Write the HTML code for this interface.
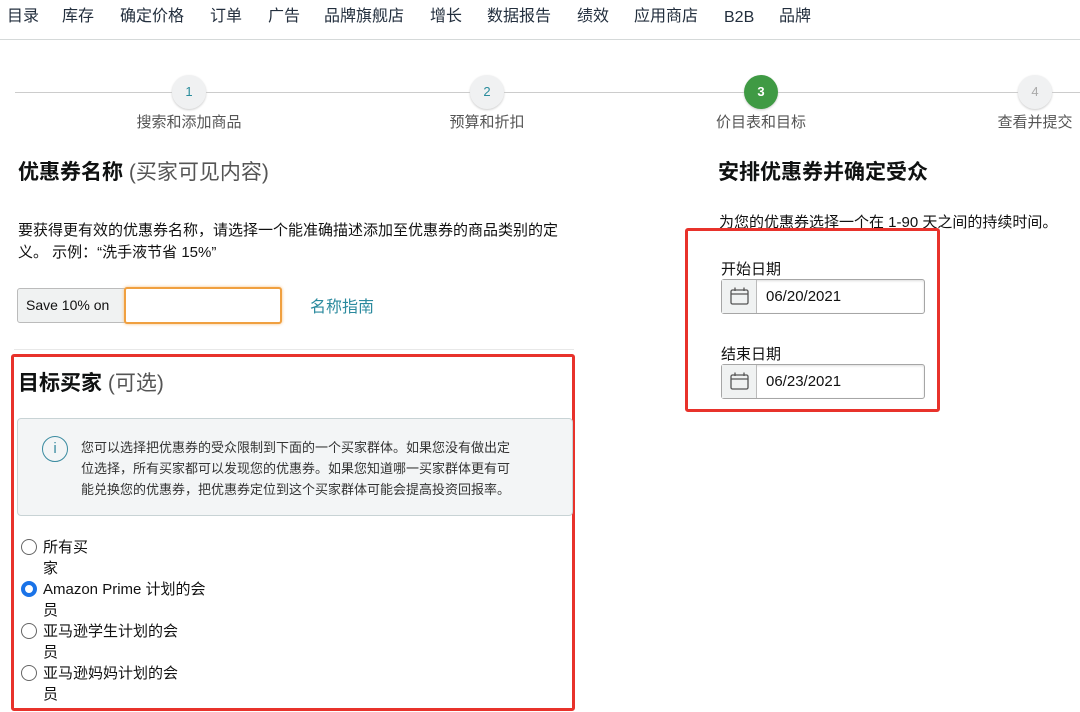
<!DOCTYPE html><html><head><meta charset="utf-8"><style>
*{margin:0;padding:0;box-sizing:border-box}
body{width:1080px;height:712px;background:#fff;position:relative;overflow:hidden;font-family:"Liberation Sans","Noto Sans CJK SC",sans-serif;color:#111}
.a{position:absolute;white-space:nowrap}
.nav{top:6px;font-size:16px;color:#232f3e;line-height:22px;height:22px}
.c{position:absolute;width:34px;height:34px;border-radius:50%;background:#f0f1f2;box-shadow:0 1px 2px #ccc;text-align:center;line-height:34px;font-size:13px;color:#2a8c9c;top:75px}
.sl{top:111px;font-size:15px;color:#555;transform:translateX(-50%)}
h2{position:absolute;font-size:21px;font-weight:bold;color:#0f1111;white-space:nowrap}
h2 span{font-weight:normal;color:#555}
.t{font-size:15px;color:#111}
.rb{position:absolute;border:3px solid #e8322b;border-radius:3px}
.in{position:absolute;width:204px;height:35px;border:1px solid #a6a6a6;border-radius:3px;background:#fff;box-shadow:inset 0 1px 2px #ddd}
.in .ic{position:absolute;left:0;top:0;width:35px;height:33px;background:#f0f2f2;border-right:1px solid #bbb}
.in .v{position:absolute;left:44px;top:8px;font-size:15px}
.r{position:absolute;left:21px;width:16px;height:16px;border:1px solid #666;border-radius:50%;background:#fff}
</style></head><body>
<div class="a nav" style="left:7px">目录</div>
<div class="a nav" style="left:62px">库存</div>
<div class="a nav" style="left:120px">确定价格</div>
<div class="a nav" style="left:210px">订单</div>
<div class="a nav" style="left:268px">广告</div>
<div class="a nav" style="left:324px">品牌旗舰店</div>
<div class="a nav" style="left:430px">增长</div>
<div class="a nav" style="left:487px">数据报告</div>
<div class="a nav" style="left:577px">绩效</div>
<div class="a nav" style="left:634px">应用商店</div>
<div class="a nav" style="left:724px;top:7px">B2B</div>
<div class="a nav" style="left:779px">品牌</div>
<div class="a" style="left:0;top:39px;width:1080px;height:1px;background:#d5d9d9"></div>
<div class="a" style="left:15px;top:92px;width:1065px;height:1px;background:#ccc"></div>
<div class="c" style="left:172px">1</div>
<div class="c" style="left:470px">2</div>
<div class="c" style="left:744px;background:#3f9a44;color:#fff;font-weight:bold">3</div>
<div class="c" style="left:1018px;color:#aaa">4</div>
<div class="a sl" style="left:189px">搜索和添加商品</div>
<div class="a sl" style="left:487px">预算和折扣</div>
<div class="a sl" style="left:761px">价目表和目标</div>
<div class="a sl" style="left:1035px">查看并提交</div>

<h2 style="left:18px;top:156px">优惠券名称 <span>(买家可见内容)</span></h2>
<div class="a t" style="left:18px;top:220px;line-height:22px">要获得更有效的优惠券名称，请选择一个能准确描述添加至优惠券的商品类别的定<br>义。 示例：“洗手液节省 15%”</div>
<div class="a" style="left:17px;top:288px;width:110px;height:35px;background:#f0f2f2;border:1px solid #bbb;border-radius:3px;font-size:14px;line-height:33px;padding-left:8px;color:#111">Save 10% on</div>
<div class="a" style="left:124px;top:287px;width:158px;height:37px;border:2px solid #f0a040;border-radius:3px;background:#fff;box-shadow:0 0 3px #f5c080"></div>
<div class="a" style="left:310px;top:293px;font-size:16px;color:#2b8a9e">名称指南</div>
<div class="a" style="left:14px;top:349px;width:560px;height:1px;background:#e8e8e8"></div>

<div class="rb" style="left:11px;top:354px;width:564px;height:357px"></div>
<h2 style="left:18px;top:367px">目标买家 <span>(可选)</span></h2>
<div class="a" style="left:17px;top:418px;width:556px;height:98px;background:#f3f5f6;border:1px solid #c8d3d5;border-radius:4px"></div>
<div class="a" style="left:42px;top:436px;width:26px;height:26px;border:1.5px solid #3a8ba0;border-radius:50%;text-align:center;line-height:23px;color:#3a8ba0;font-size:15px">i</div>
<div class="a" style="left:81px;top:437px;font-size:13px;line-height:21px;color:#333">您可以选择把优惠券的受众限制到下面的一个买家群体。如果您没有做出定<br>位选择，所有买家都可以发现您的优惠券。如果您知道哪一买家群体更有可<br>能兑换您的优惠券，把优惠券定位到这个买家群体可能会提高投资回报率。</div>
<div class="r" style="top:539px"></div>
<div class="r" style="top:581px;border:4px solid #1a73e8"></div>
<div class="r" style="top:623px"></div>
<div class="r" style="top:665px"></div>
<div class="a t" style="left:43px;top:537px;line-height:21px">所有买<br>家<br>Amazon Prime 计划的会<br>员<br>亚马逊学生计划的会<br>员<br>亚马逊妈妈计划的会<br>员</div>

<h2 style="left:718px;top:156px">安排优惠券并确定受众</h2>
<div class="a t" style="left:719px;top:211px">为您的优惠券选择一个在 1-90 天之间的持续时间。</div>
<div class="rb" style="left:685px;top:228px;width:255px;height:184px"></div>
<div class="a t" style="left:721px;top:258px">开始日期</div>
<div class="in" style="left:721px;top:279px"><div class="ic"><svg width="35" height="33"><rect x="9" y="10" width="17" height="14" rx="1.5" fill="none" stroke="#555" stroke-width="1.3"/><line x1="9" y1="14" x2="26" y2="14" stroke="#555" stroke-width="1.3"/><line x1="13" y1="7.5" x2="13" y2="11" stroke="#555" stroke-width="1.3"/><line x1="22" y1="7.5" x2="22" y2="11" stroke="#555" stroke-width="1.3"/></svg></div><div class="v">06/20/2021</div></div>
<div class="a t" style="left:721px;top:343px">结束日期</div>
<div class="in" style="left:721px;top:364px"><div class="ic"><svg width="35" height="33"><rect x="9" y="10" width="17" height="14" rx="1.5" fill="none" stroke="#555" stroke-width="1.3"/><line x1="9" y1="14" x2="26" y2="14" stroke="#555" stroke-width="1.3"/><line x1="13" y1="7.5" x2="13" y2="11" stroke="#555" stroke-width="1.3"/><line x1="22" y1="7.5" x2="22" y2="11" stroke="#555" stroke-width="1.3"/></svg></div><div class="v">06/23/2021</div></div>
</body></html>
